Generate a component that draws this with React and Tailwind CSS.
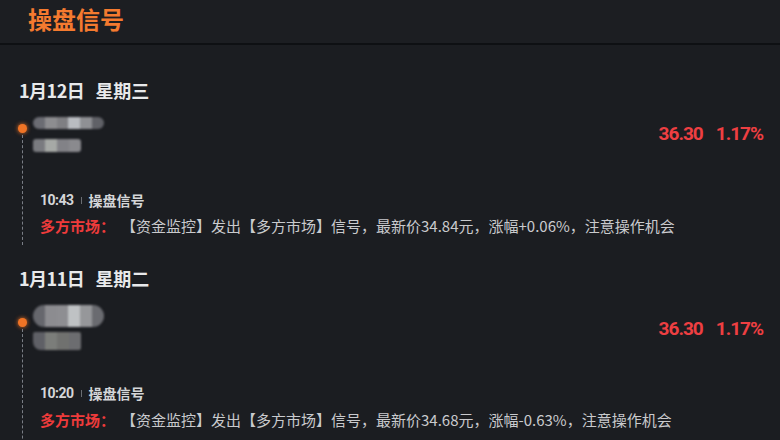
import React from "react";

const cjk = "font-['Noto_Sans_CJK_SC','Noto_Sans',sans-serif]";
const num = "font-['Roboto','Noto_Sans_CJK_SC',sans-serif]";

function Seg({ c }) {
  return <div className={`flex-1 ${c}`} />;
}

function Item({ blocks, dotTopCls, blocksCls, timeCls, contentCls, priceCls, time, text, last }) {
  return (
    <div className="flex">
      <div className="flex w-[8px] flex-col items-center">
        <div className={dotTopCls} />
        <div className="h-[9px] w-[9px] shrink-0 rounded-full bg-[#f07426] shadow-[0_0_4px_#f07426]" />
        <div className="mt-[2px] flex-1 border-l border-dashed border-[#7a7e86]" />
      </div>
      <div className={`ml-[7px] flex flex-1 flex-col ${last ? "pb-[40px]" : "pb-[10px]"}`}>
        <div className={`flex ${blocksCls}`}>
          {blocks}
          <div className="flex-1" />
          <div
            className={`flex gap-[13px] pr-[17px] text-[19px] font-bold leading-[24px] tracking-[-1px] text-[#ee3f42] ${num} ${priceCls}`}
          >
            <span>36.30</span>
            <span>1.17%</span>
          </div>
        </div>
        <div className={`flex h-[16px] items-center pl-[7px] ${timeCls}`}>
          <span className={`text-[14px] font-bold tracking-[-0.5px] text-[#d4d5d8] ${num}`}>{time}</span>
          <span className="mx-[7px] h-[7px] w-px bg-[#6a6d72]" />
          <span className={`text-[14px] font-bold text-[#d4d5d8] ${cjk}`}>操盘信号</span>
        </div>
        <div className={`flex h-[18px] items-center pl-[7px] ${cjk} ${contentCls}`}>
          <span className="text-[15px] font-bold text-[#ee3b3b]">多方市场：</span>
          <span className="ml-[6px] whitespace-nowrap text-[15px] text-[#c9cacd]">{text}</span>
        </div>
      </div>
    </div>
  );
}

function DateRow({ day, week, mtCls }) {
  return (
    <div
      className={`flex h-[24px] items-center pl-[19px] text-[18px] font-bold leading-[24px] text-[#e8e9eb] ${cjk} ${mtCls}`}
    >
      <span className="tracking-[-0.5px]">{day}</span>
      <span className="ml-[11px]">{week}</span>
    </div>
  );
}

export default function App() {
  return (
    <div className={`h-[440px] w-[780px] overflow-hidden bg-[#1b1d21] ${cjk}`}>
      <div className="flex h-[45px] items-center border-b-2 border-[#0e1013] bg-[#1c1e22] pb-[6px] pl-[28px]">
        <span className="text-[24px] font-bold text-[#f47a2f]">操盘信号</span>
      </div>

      <DateRow day="1月12日" week="星期三" mtCls="mt-[33px]" />
      <div className="mt-[15px] pl-[18px]">
        <Item
          dotTopCls="h-[7px]"
          blocksCls="h-[35px]"
          priceCls="mt-[5px]"
          timeCls="mt-[40px]"
          contentCls="mt-[9px]"
          time="10:43"
          text="【资金监控】发出【多方市场】信号，最新价34.84元，涨幅+0.06%，注意操作机会"
          blocks={
            <div className="flex flex-col gap-[10px] blur-[1px]">
              <div className="flex h-[12px] w-[71px] overflow-hidden rounded-full">
                <Seg c="bg-[#6b6c73]" />
                <Seg c="bg-[#8d8d90]" />
                <Seg c="bg-[#7f7f83]" />
                <Seg c="bg-[#b9bcc1]" />
                <Seg c="bg-[#8f9094]" />
                <Seg c="bg-[#606167]" />
              </div>
              <div className="flex h-[13px] w-[48px] overflow-hidden rounded-[3px]">
                <Seg c="bg-[#7a7b80]" />
                <Seg c="bg-[#a6a9a6]" />
                <Seg c="bg-[#828287]" />
                <Seg c="bg-[#8a8a8e]" />
              </div>
            </div>
          }
        />
      </div>

      <DateRow day="1月11日" week="星期二" mtCls="mt-[21px]" />
      <div className="mt-[15px] pl-[18px]">
        <Item
          last
          dotTopCls="h-[13px]"
          blocksCls="h-[45px]"
          priceCls="mt-[12px]"
          timeCls="mt-[35px]"
          contentCls="mt-[10px]"
          time="10:20"
          text="【资金监控】发出【多方市场】信号，最新价34.68元，涨幅-0.63%，注意操作机会"
          blocks={
            <div className="flex flex-col gap-[5px] blur-[1px]">
              <div className="flex h-[22px] w-[71px] overflow-hidden rounded-full">
                <Seg c="bg-[#66676d]" />
                <Seg c="bg-[#8c8c90]" />
                <Seg c="bg-[#8e8e92]" />
                <Seg c="bg-[#bfc2c4]" />
                <Seg c="bg-[#96979a]" />
                <Seg c="bg-[#6a6b70]" />
              </div>
              <div className="flex h-[18px] w-[48px] overflow-hidden rounded-bl-[8px] rounded-br-[2px] rounded-t-[2px]">
                <Seg c="bg-[#5f6066]" />
                <Seg c="bg-[#7b7d7a]" />
                <Seg c="bg-[#70716f]" />
                <Seg c="bg-[#6c6d70]" />
              </div>
            </div>
          }
        />
      </div>
    </div>
  );
}
